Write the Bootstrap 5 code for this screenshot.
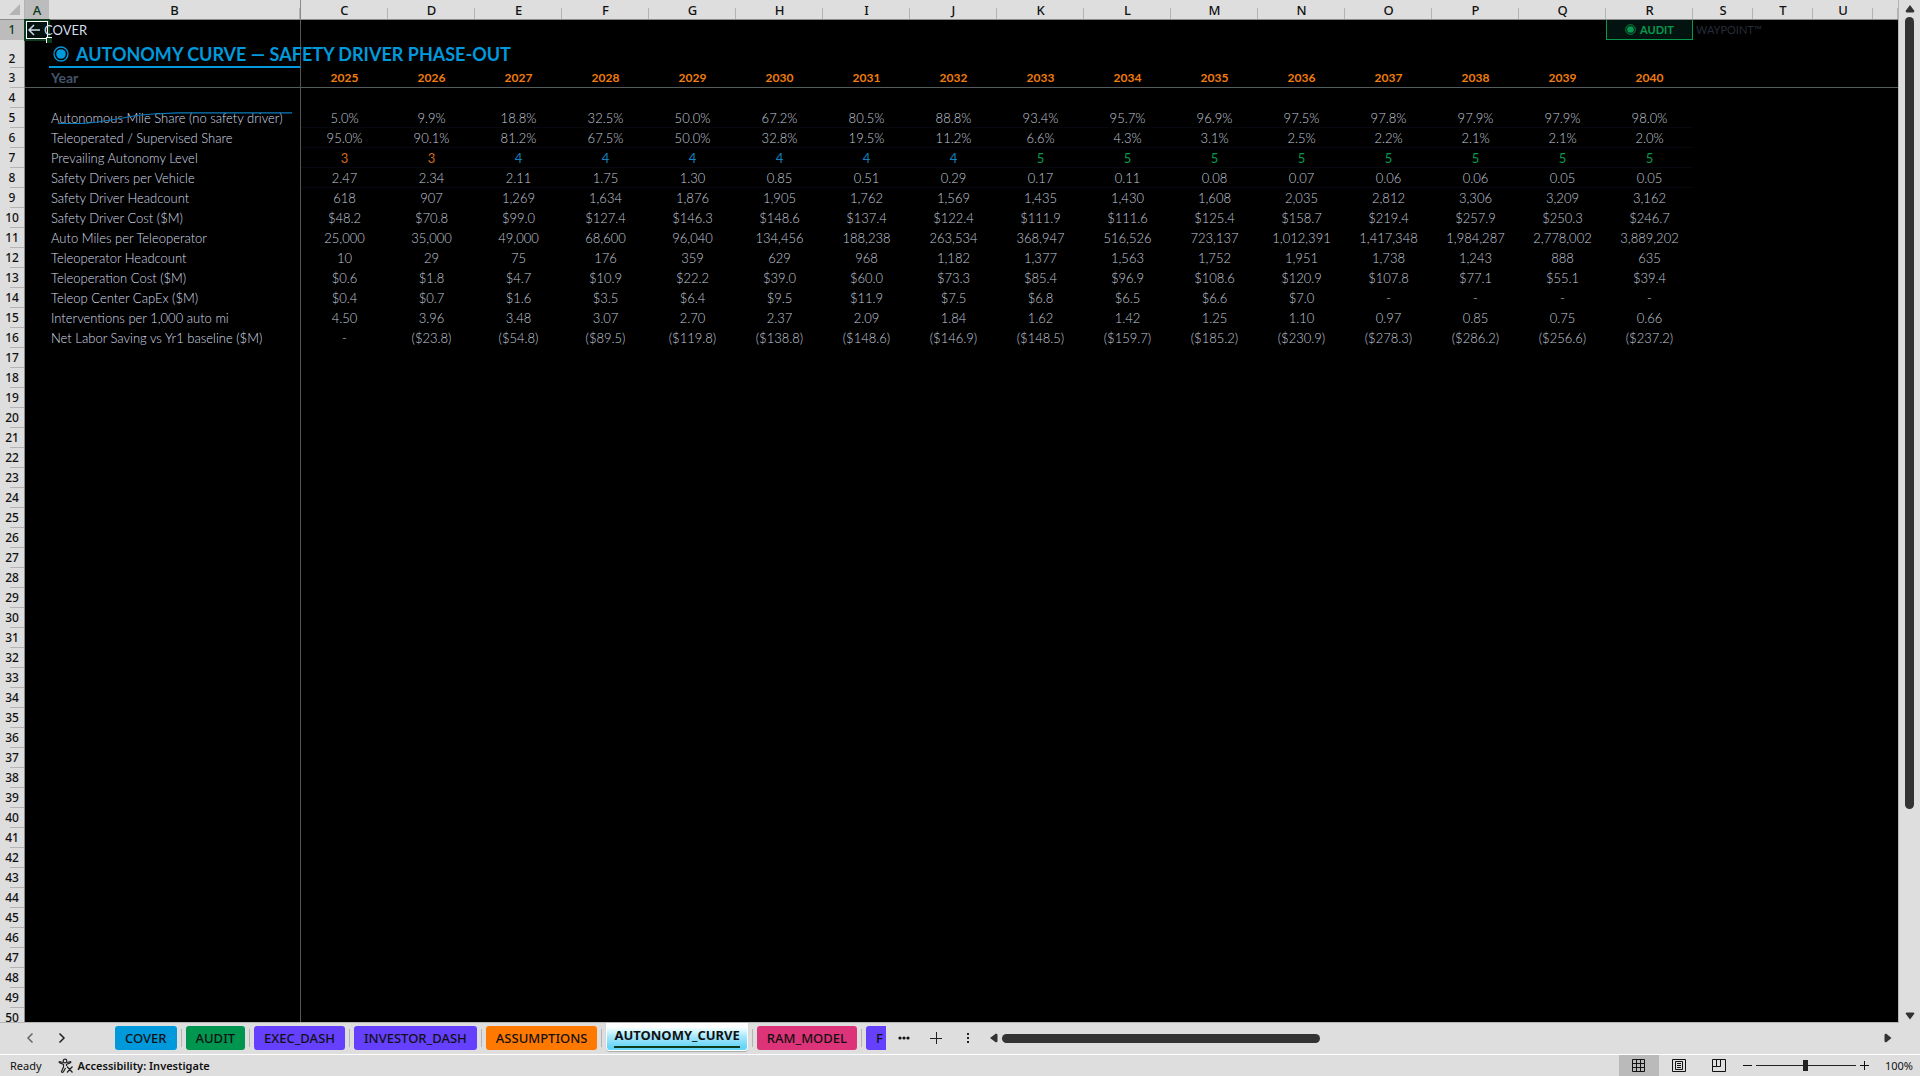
<!DOCTYPE html>
<html lang="en">
<head>
<meta charset="utf-8">
<meta name="viewport" content="width=device-width, initial-scale=1">
<title>AUTONOMY_CURVE</title>
<link href="https://cdn.jsdelivr.net/npm/bootstrap@5.3.0/dist/css/bootstrap.min.css" rel="stylesheet">
<style>
  :root { --chrome: #dedede; --line: #b4b4b4; --ink: #111; }
  body { background: var(--chrome); color: var(--ink); font-family: "Noto Sans", "Open Sans", sans-serif; font-size: 11px; }
  .grid-area { background: #000; border-right: 1px solid var(--line); border-bottom: 1px solid var(--line); min-width: 0; min-height: 0; }
  .sheet { table-layout: fixed; width: 100%; border-collapse: separate; border-spacing: 0; font-family: Lato, "Open Sans", sans-serif; font-size: 13px; font-weight: 300; line-height: 18px; color: #c2cad8; }
  .sheet th, .sheet td { padding: 0; height: 20px; white-space: nowrap; text-align: center; vertical-align: middle; }
  .sheet tr.tall > * { height: 28px; }
  .sheet thead th { background: linear-gradient(var(--line), var(--line)) right bottom / 1px 11px no-repeat var(--chrome); border-bottom: 1px solid #8a8a8a; color: var(--ink); font-family: "Noto Sans", sans-serif; font-size: 13px; font-weight: 500; }
  .sheet tbody th { background: linear-gradient(var(--line), var(--line)) right bottom / 14px 1px no-repeat var(--chrome); border-right: 1px solid #8a8a8a; color: var(--ink); font-family: "Noto Sans", sans-serif; font-size: 12px; font-weight: 500; }
  .sheet tr.tall th { vertical-align: bottom; }
  .sheet thead th.picked, .sheet tbody th.picked { background: #bcbcbc; color: #0c3c1e; }
  .sheet thead th.corner { background: var(--chrome); border-right: 1px solid var(--line); }
  .sheet thead th.corner svg { display: block; margin-left: 9px; }
  .sheet .name { text-align: left; padding-left: 2px; border-right: 1px solid #555; color: #d6dce8; }
  .sheet thead th.name-head { border-right: 1px solid #8a8a8a; }
  .sheet tr.rule td { border-bottom: 1px solid #555c5c; }
  .sheet tr.hair td.num { border-bottom: 1px solid #07070f; }
  .sheet .yr { color: #f07d0c; font-weight: 700; font-size: 12px; }
  .sheet .year-label { color: #44546a; font-size: 14px; font-weight: 700; }
  .sheet .lv3 { color: #d26a1c; font-weight: 400; } .sheet .lv4 { color: #1380bf; font-weight: 400; } .sheet .lv5 { color: #08994f; font-weight: 400; }
  .sheet td.active-cell { position: relative; background: #03130f; text-align: left; }
  .pick { position: absolute; inset: -1px; border: 2px solid #0c3c1e; box-shadow: inset 0 0 0 1px #fff; }
  .pick::after { content: ""; position: absolute; right: -4px; bottom: -4px; width: 6px; height: 6px; background: #0c3c1e; border: 1px solid #fff; border-width: 1px 0 0 1px; }
  .sheet .cover-link { position: relative; display: flex; align-items: center; gap: 4px; width: max-content; color: #d4dceb; font-weight: 400; font-size: 13px; text-decoration: none; padding-left: 3px; }
  .sheet .title-cell { text-align: left; color: #0099dc; font-size: 18px; font-weight: 700; line-height: 24px; border-bottom: 2px solid #0099dc; border-right: 1px solid #555; padding-left: 4px; }
  .title-run { position: relative; display: flex; align-items: center; gap: 7px; width: max-content; padding-top: 2px; }
  .sheet .audit-cell { background: #03130f; border: 1px solid #08994f; border-top: 0; }
  .sheet .audit-link { display: flex; align-items: center; justify-content: center; gap: 4px; color: #08994f; font-size: 11px; font-weight: 700; text-decoration: none; }
  .sheet .brand-cell { text-align: left; padding-left: 3px; color: #262c38; font-size: 11px; font-weight: 400; }
  .spark-cell { position: relative; }
  .spark { position: absolute; left: 9px; top: 4px; width: 234px; height: 12px; }
  .v-rail { width: 21px; padding: 5px 0 3px; }
  .v-thumb { width: 9px; height: 792px; background: #333; border-radius: 5px; }
  .tab-strip { height: 31px; padding-bottom: 1px; }
  .tab-nav { width: 115px; padding-left: 26px; gap: 24px; }
  .plain { border: 0; background: none; padding: 0; line-height: 0; color: var(--ink); }
  .sheet-tab { border: 0; border-radius: 3px; height: 24px; padding: 0 10px; font-size: 13px; font-weight: 500; line-height: 24px; color: #111; white-space: nowrap; }
  .tab-gap { width: 1px; height: 18px; background: var(--line); margin: 0 4px; }
  .tab-blue { background: #0099dc; } .tab-green { background: #00964f; } .tab-violet { background: #6540ff; } .tab-orange { background: #ff7900; } .tab-pink { background: #dd3378; }
  .tab-current { align-self: flex-start; height: 28px; padding: 0 7px; border: 1px solid #fff; border-top: 0; border-radius: 0 0 4px 4px; background: linear-gradient(#fff 0 4px, #d5faff 8px, #a4e6fa 14px, #66d6f8 24px); box-shadow: 0 1px 1px #aaa; font-weight: 700; }
  .tab-current span { display: block; border-bottom: 2px solid #0c3c1e; line-height: 18px; padding-bottom: 2px; }
  .tab-cut { width: 16px; overflow: hidden; border-radius: 3px 0 0 3px; }
  .h-thumb { width: 318px; height: 9px; background: #333; border-radius: 5px; }
  .status { height: 22px; border-top: 1px solid #fff; padding-left: 10px; padding-right: 7px; }
  .status .label { line-height: 16px; }
  .view-btn { width: 40px; height: 21px; }
  .view-btn.on { background: #bababa; }
  .zoom { appearance: none; width: 100px; height: 11px; background: linear-gradient(#222, #222) center / 100% 1px no-repeat; }
  .zoom::-webkit-slider-thumb { appearance: none; width: 5px; height: 11px; background: #222; }
</style>
</head>
<body class="vh-100 d-flex flex-column overflow-hidden">
<main class="d-flex flex-grow-1 overflow-hidden">
  <div class="grid-area flex-grow-1 overflow-hidden">
    <table class="sheet" id="sheet">
      <colgroup id="cols"></colgroup>
      <thead><tr id="letters"></tr></thead>
      <tbody id="rows"></tbody>
    </table>
  </div>
  <div class="v-rail d-flex flex-column flex-shrink-0 align-items-center">
    <button class="plain" aria-label="Scroll up"><svg width="10" height="8"><path d="M5 0 9.500 6 8.500 7.500H1.500L.5 6z" fill="#333"/></svg></button>
    <div class="v-thumb mt-1"></div>
    <button class="plain mt-auto" aria-label="Scroll down"><svg width="10" height="8"><path d="M5 7.500 .5 1.500 1.500 .5H8.500L9.500 1.500z" fill="#333"/></svg></button>
  </div>
</main>
<nav class="tab-strip d-flex align-items-center flex-shrink-0" aria-label="Sheets">
  <div class="tab-nav d-flex flex-shrink-0">
    <button class="plain" aria-label="Previous sheet"><svg width="8" height="12" fill="none" stroke="#666" stroke-width="1.500"><path d="M6.500 1.500 2 6l4.500 4.500"/></svg></button>
    <button class="plain" aria-label="Next sheet"><svg width="8" height="12" fill="none" stroke="#222" stroke-width="1.500"><path d="M1.500 1.500 6 6l-4.500 4.500"/></svg></button>
  </div>
  <button class="sheet-tab tab-blue">COVER</button><i class="tab-gap"></i>
  <button class="sheet-tab tab-green">AUDIT</button><i class="tab-gap"></i>
  <button class="sheet-tab tab-violet">EXEC_DASH</button><i class="tab-gap"></i>
  <button class="sheet-tab tab-violet">INVESTOR_DASH</button><i class="tab-gap"></i>
  <button class="sheet-tab tab-orange">ASSUMPTIONS</button><i class="tab-gap"></i>
  <button class="sheet-tab tab-current" aria-current="page"><span>AUTONOMY_CURVE</span></button><i class="tab-gap"></i>
  <button class="sheet-tab tab-pink">RAM_MODEL</button><i class="tab-gap"></i>
  <button class="sheet-tab tab-violet tab-cut">F</button>
  <button class="plain ms-2 ps-1" aria-label="More sheets"><svg width="12" height="12" fill="#111"><circle cx="2" cy="6" r="1.600"/><circle cx="6" cy="6" r="1.600"/><circle cx="10" cy="6" r="1.600"/></svg></button>
  <button class="plain ms-3 ps-1" aria-label="New sheet"><svg width="12" height="12" stroke="#222"><path d="M0 6.500H12M6.500 0V12"/></svg></button>
  <span class="ms-4 d-flex" aria-hidden="true"><svg width="4" height="12" fill="#222"><path d="M1 1h2v2H1zM1 5h2v2H1zM1 9h2v2H1z"/></svg></span>
  <div class="d-flex align-items-center flex-grow-1 ms-3 ps-1 pe-4">
    <button class="plain me-1" aria-label="Scroll left"><svg width="8" height="10"><path d="M0 5 6 .5 7.500 1.500V8.500L6 9.500z" fill="#333"/></svg></button>
    <div class="h-thumb"></div>
    <button class="plain ms-auto me-1" aria-label="Scroll right"><svg width="8" height="10"><path d="M7.500 5 2 .5 .5 1.500V8.500L2 9.500z" fill="#333"/></svg></button>
  </div>
</nav>
<footer class="status d-flex align-items-center flex-shrink-0">
  <span class="label">Ready</span>
  <button class="plain d-flex align-items-center gap-1 ms-3 fw-semibold">
    <svg width="16" height="16" fill="none" stroke="#222" stroke-width="1.200"><circle cx="7" cy="3" r="1.800"/><path d="M1.500 3.500c-1 1 0 1.500 4 2.800V9L3.500 13.500c.5 1.500 1.500 1 2.200-.3L7.500 10M12.500 3.500c1 1 0 1.500-4 2.800V8M1.500 3.500 5 4.500M12.500 3.500 9 4.500M9 8.500l5.500 6M14.500 8.500 9 14.500"/></svg>
    <span class="label">Accessibility: Investigate</span>
  </button>
  <div class="d-flex align-items-center ms-auto">
    <button class="plain view-btn on" aria-label="Normal view"><svg width="14" height="14" fill="none" stroke="#111"><path d="M.5.5h12v12H.5zM4.500 0v13M8.500 0v13M0 4.500h13M0 8.500h13"/></svg></button>
    <button class="plain view-btn" aria-label="Page layout view"><svg width="14" height="14" fill="none" stroke="#111"><path d="M.5.5h13v12H.5zM3.500 2.500h7v8h-7zM5 4.500h4M5 6.500h4M5 8.500h4"/></svg></button>
    <button class="plain view-btn" aria-label="Page break preview"><svg width="14" height="14" fill="none" stroke="#111"><path d="M.5.5h13v12H.5zM.5 7.500h8v-7M4.500 0v7"/></svg></button>
    <button class="plain ms-1" aria-label="Zoom out"><svg width="9" height="9" stroke="#111"><path d="M0 4.500H9"/></svg></button>
    <input class="zoom mx-1" type="range" min="0" max="100" value="50" aria-label="Zoom">
    <button class="plain" aria-label="Zoom in"><svg width="9" height="9" stroke="#111"><path d="M0 4.500H9M4.500 0V9"/></svg></button>
    <span class="label ms-3">100%</span>
  </div>
</footer>
<script>
const data = [
  ["Autonomous Mile Share (no safety driver)", "5.0%|9.9%|18.8%|32.5%|50.0%|67.2%|80.5%|88.8%|93.4%|95.7%|96.9%|97.5%|97.8%|97.9%|97.9%|98.0%"],
  ["Teleoperated / Supervised Share", "95.0%|90.1%|81.2%|67.5%|50.0%|32.8%|19.5%|11.2%|6.6%|4.3%|3.1%|2.5%|2.2%|2.1%|2.1%|2.0%"],
  ["Prevailing Autonomy Level", "3|3|4|4|4|4|4|4|5|5|5|5|5|5|5|5"],
  ["Safety Drivers per Vehicle", "2.47|2.34|2.11|1.75|1.30|0.85|0.51|0.29|0.17|0.11|0.08|0.07|0.06|0.06|0.05|0.05"],
  ["Safety Driver Headcount", "618|907|1,269|1,634|1,876|1,905|1,762|1,569|1,435|1,430|1,608|2,035|2,812|3,306|3,209|3,162"],
  ["Safety Driver Cost ($M)", "$48.2|$70.8|$99.0|$127.4|$146.3|$148.6|$137.4|$122.4|$111.9|$111.6|$125.4|$158.7|$219.4|$257.9|$250.3|$246.7"],
  ["Auto Miles per Teleoperator", "25,000|35,000|49,000|68,600|96,040|134,456|188,238|263,534|368,947|516,526|723,137|1,012,391|1,417,348|1,984,287|2,778,002|3,889,202"],
  ["Teleoperator Headcount", "10|29|75|176|359|629|968|1,182|1,377|1,563|1,752|1,951|1,738|1,243|888|635"],
  ["Teleoperation Cost ($M)", "$0.6|$1.8|$4.7|$10.9|$22.2|$39.0|$60.0|$73.3|$85.4|$96.9|$108.6|$120.9|$107.8|$77.1|$55.1|$39.4"],
  ["Teleop Center CapEx ($M)", "$0.4|$0.7|$1.6|$3.5|$6.4|$9.5|$11.9|$7.5|$6.8|$6.5|$6.6|$7.0|-|-|-|-"],
  ["Interventions per 1,000 auto mi", "4.50|3.96|3.48|3.07|2.70|2.37|2.09|1.84|1.62|1.42|1.25|1.10|0.97|0.85|0.75|0.66"],
  ["Net Labor Saving vs Yr1 baseline ($M)", "-|($23.8)|($54.8)|($89.5)|($119.8)|($138.8)|($148.6)|($146.9)|($148.5)|($159.7)|($185.2)|($230.9)|($278.3)|($286.2)|($256.6)|($237.2)"]
];
const widths = [25, 24, 252, ...Array(16).fill(87), 60, 60, 60];
document.getElementById("cols").innerHTML = widths.map(w => `<col style="width:${w}px">`).join("") + "<col>";
document.getElementById("letters").innerHTML =
  '<th class="corner"><svg width="11" height="11"><path d="M11 0V11H0z" fill="#b4b4b4"/></svg></th>' +
  [..."ABCDEFGHIJKLMNOPQRSTU"].map(c => `<th class="${c === "A" ? "picked" : c === "B" ? "name-head" : ""}">${c}</th>`).join("") + "<th></th>";

const blank = n => "<td></td>".repeat(n);
const dot = s => `<svg width="${s}" height="${s}" viewBox="0 0 16 16"><circle cx="8" cy="8" r="7" fill="none" stroke="currentColor" stroke-width="1.300"/><circle cx="8" cy="8" r="4.800" fill="currentColor"/></svg>`;
const arrow = '<svg width="12" height="12" fill="none" stroke="currentColor" stroke-width="1.500"><path d="M12 6H1.500M6 1 1 6l5 5"/></svg>';
let html = `<tr><th class="picked">1</th><td class="active-cell"><span class="pick"></span><a class="cover-link" href="#">${arrow}COVER</a></td><td class="name"></td>${blank(15)}<td class="audit-cell"><a class="audit-link" href="#">${dot(11)}AUDIT</a></td><td class="brand-cell">WAYPOINT™</td>${blank(3)}</tr>`;
html += `<tr class="tall"><th>2</th><td></td><td class="title-cell"><span class="title-run">${dot(16)}AUTONOMY CURVE — SAFETY DRIVER PHASE-OUT</span></td>${blank(20)}</tr>`;
html += `<tr class="rule"><th>3</th><td></td><td class="name year-label">Year</td>${Array.from({length: 16}, (_, i) => `<td class="yr">${2025 + i}</td>`).join("")}${blank(4)}</tr>`;
html += `<tr><th>4</th><td></td><td class="name"></td>${blank(20)}</tr>`;
data.forEach(([label, values], i) => {
  const spark = i ? "" : '<svg class="spark" viewBox="0 0 234 12" preserveAspectRatio="none"><path d="M0 11.500H24L40 10 62 6.500 78 3.500 95 2 120 .8H234" fill="none" stroke="#0b7cc0" stroke-width="1.200"/></svg>';
  const cells = values.split("|").map(v => `<td class="num ${i === 2 ? "lv" + v : ""}">${v}</td>`).join("");
  html += `<tr class="${i < 4 ? "hair" : ""}"><th>${i + 5}</th><td></td><td class="name ${i ? "" : "spark-cell"}">${label}${spark}</td>${cells}${blank(4)}</tr>`;
});
for (let r = 17; r <= 50; r++) html += `<tr><th>${r}</th><td></td><td class="name"></td>${blank(20)}</tr>`;
document.getElementById("rows").innerHTML = html;
</script>
<script src="https://cdn.jsdelivr.net/npm/bootstrap@5.3.0/dist/js/bootstrap.bundle.min.js"></script>
</body>
</html>
